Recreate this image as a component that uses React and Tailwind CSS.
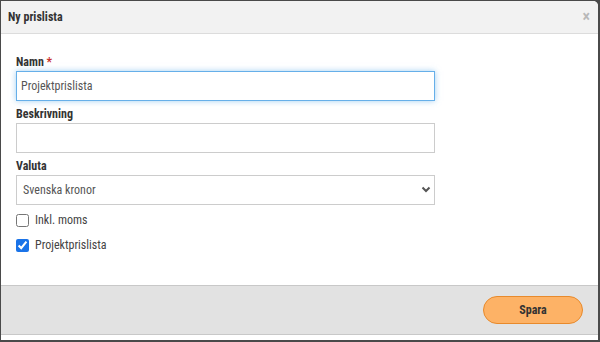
import { useState } from "react";

export default function App() {
  const [form, setForm] = useState({ namn: "Projektprislista", beskrivning: "", valuta: "SEK", moms: false, projekt: true });
  const onChange = e => {
    const { name, type, checked, value } = e.target;
    setForm({ ...form, [name]: type === "checkbox" ? checked : value });
  };

  return (
    <div className="w-[600px] h-[342px] bg-[#4a4a4a] pl-px pt-px pr-[2px] pb-[2px] font-['Roboto',sans-serif] font-stretch-condensed text-[#333]">
      <div className="h-full bg-white rounded-tr-[5px] flex flex-col overflow-hidden">
        <div className="h-[33px] shrink-0 bg-[#f2f2f2] border-b border-[#dcdcdc] flex items-center justify-between pl-[7px] pr-[8px]">
          <h3 className="text-[12px] font-bold leading-none">Ny prislista</h3>
          <button className="text-[#b8b8b8] text-[16px] font-bold leading-none">×</button>
        </div>

        <form className="flex-1 pl-[15px] pt-[19px] w-[434px]">
          <label className="block text-[12px] font-bold leading-[18px] h-[18px]">
            Namn <span className="text-[#c9302c]">*</span>
          </label>
          <input
            name="namn"
            value={form.namn}
            onChange={onChange}
            className="w-full h-[30px] px-[4px] text-[12px] text-[#555] border border-[#66afe9] shadow-[0_0_6px_rgba(102,175,233,0.6)] outline-none"
          />
          <label className="block text-[12px] font-bold leading-[18px] h-[18px] mt-[4px]">Beskrivning</label>
          <input
            name="beskrivning"
            value={form.beskrivning}
            onChange={onChange}
            className="w-full h-[30px] px-[4px] text-[12px] border border-[#ccc] outline-none"
          />
          <label className="block text-[12px] font-bold leading-[18px] h-[18px] mt-[4px]">Valuta</label>
          <div className="relative">
            <select
              name="valuta"
              value={form.valuta}
              onChange={onChange}
              className="w-full h-[30px] pl-[6px] text-[12px] text-[#555] border border-[#ccc] outline-none appearance-none bg-white"
            >
              <option value="SEK">Svenska kronor</option>
            </select>
            <svg className="absolute right-[4px] top-[11px] pointer-events-none" width="10" height="8" viewBox="0 0 10 8">
              <path d="M1.5 1.5 L5 5 L8.5 1.5" fill="none" stroke="#555" strokeWidth="2" />
            </svg>
          </div>
          <label className="flex items-center gap-[6px] mt-[8px] h-[14px] text-[12px] text-[#444]">
            <input type="checkbox" name="moms" checked={form.moms} onChange={onChange} className="w-[13px] h-[13px] m-0" />
            Inkl. moms
          </label>
          <label className="flex items-center gap-[6px] mt-[11px] h-[14px] text-[12px] text-[#444]">
            <input type="checkbox" name="projekt" checked={form.projekt} onChange={onChange} className="w-[13px] h-[13px] m-0 accent-[#1a73e8]" />
            Projektprislista
          </label>
        </form>

        <div className="h-[50px] shrink-0 bg-[#e2e2e2] border-t border-b border-[#c8c8c8] flex items-center justify-end pr-[15px]">
          <button className="w-[100px] h-[28px] rounded-full bg-[#fdb266] border border-[#e88a2c] text-[12px] font-bold text-[#333]">
            Spara
          </button>
        </div>
        <div className="h-[5px] shrink-0 bg-white" />
      </div>
    </div>
  );
}
